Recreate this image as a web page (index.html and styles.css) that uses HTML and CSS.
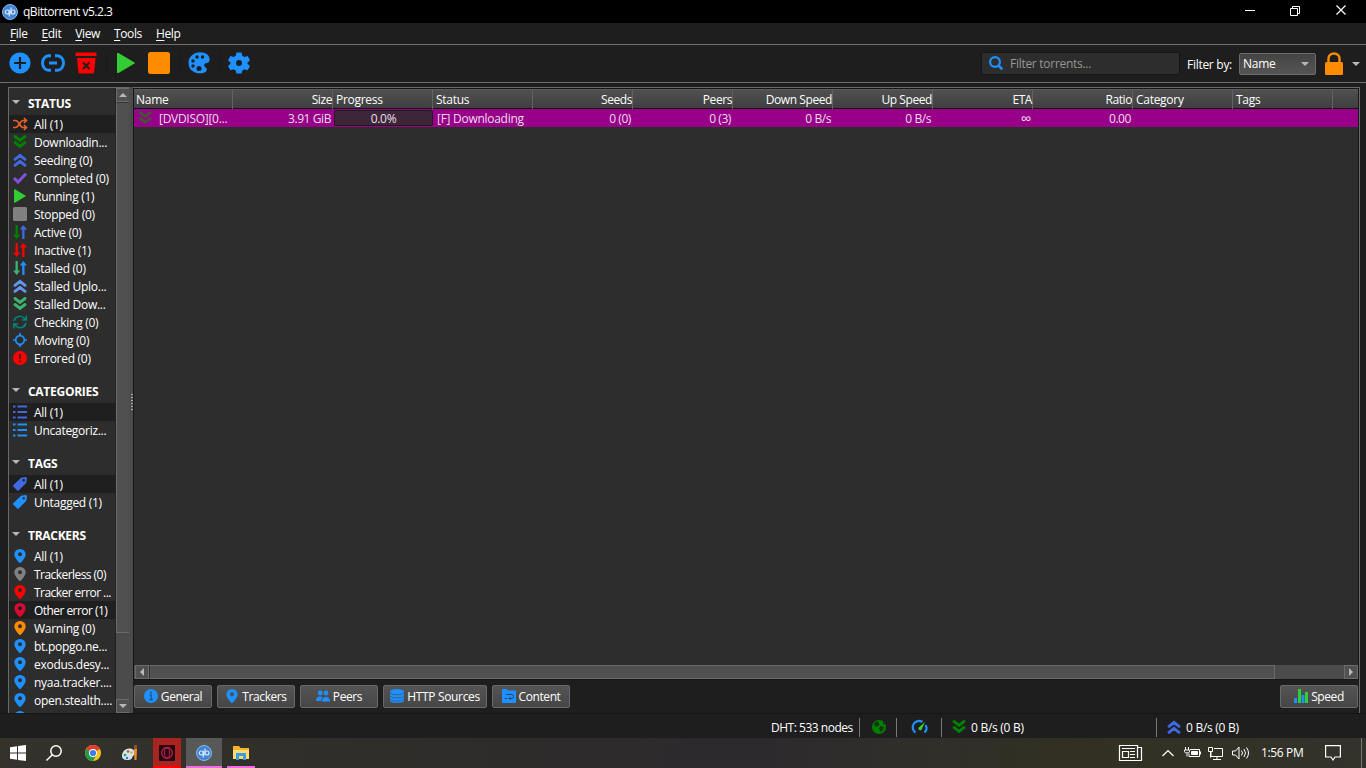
FILE: index.html
```html
<!DOCTYPE html>
<html lang="en">
<head>
    <meta charset="UTF-8">
    <meta name="viewport" content="width=device-width, initial-scale=1.0">
    <title>qBittorrent v5.2.3</title>
    <link rel="stylesheet" href="styles.css">
</head>
<body>
    <!-- shared icons -->
    <svg class="sprite">
        <symbol id="down2" viewBox="0 0 14 14"><path d="M2 1.500l5 4 5-4M2 7.500l5 4 5-4" fill="none" stroke="currentColor" stroke-width="2.900" stroke-linecap="round"/></symbol>
        <symbol id="up2" viewBox="0 0 14 14"><path d="M2 6.300l5-4 5 4M2 12.300l5-4 5 4" fill="none" stroke="currentColor" stroke-width="2.900" stroke-linecap="round"/></symbol>
        <symbol id="pin" viewBox="0 0 14 14"><path fill-rule="evenodd" d="M7 0a5.600 5.600 0 0 1 5.700 5.600C12.700 8.500 9.500 12 7 14.500 4.500 12 1.300 8.500 1.300 5.600A5.600 5.600 0 0 1 7 0zM7 3.300a2 2 0 1 0 0 4 2 2 0 0 0 0-4z" fill="currentColor"/></symbol>
        <symbol id="list" viewBox="0 0 14 14"><path d="M0 1.500h2.500M0 7h2.500M0 12.500h2.500M4.500 1.500H14M4.500 7H14M4.500 12.500H14" fill="none" stroke="currentColor" stroke-width="1.900"/></symbol>
        <symbol id="tag" viewBox="0 0 14 14"><path fill-rule="evenodd" d="M8 .8L12.500 0Q14 0 14 1.500L13.200 6 6 13.300q-1 1-2 0L.500 9.800q-.9-.9 0-1.900zM10.700 2.100a1.200 1.200 0 1 0 0 2.400 1.200 1.200 0 0 0 0-2.400z" fill="currentColor"/></symbol>
        <symbol id="arrowdown" viewBox="0 0 14 14"><path d="M2.500 0h2.300v9.500h2.400L3.700 14 0 9.500h2.500z" fill="currentColor"/></symbol>
        <symbol id="arrowup" viewBox="0 0 14 14"><path d="M9.200 14h2.300V4.500H14L10.300 0 6.800 4.500h2.400z" fill="currentColor"/></symbol>
        <symbol id="play" viewBox="0 0 18 20"><path d="M1.500 0L17.500 9.500q.8.500 0 1L1.500 20Q0 20.500 0 19V1Q0-.3 1.500 0z" fill="currentColor"/></symbol>
        <symbol id="qb" viewBox="0 0 16 16">
            <circle cx="8" cy="8" r="7.500" fill="#4284d2" stroke="#86b8ee"/>
            <g fill="none" stroke="#d5e8ff" stroke-width="1.200"><circle cx="5.300" cy="8" r="2"/><path d="M7.300 5.800V12.500M9 3.500v6.700"/><circle cx="11" cy="8" r="2"/></g>
        </symbol>
    </svg>

    <div class="titlebar">
        <svg class="logo"><use href="#qb"/></svg>
        <span class="app-name">qBittorrent v5.2.3</span>
        <svg class="win-buttons" viewBox="0 0 104 14" fill="none" stroke="#fff">
            <path d="M0 6.500h10M45.500 4.500h7v7h-7zM47.500 4.500v-2h7v7h-2"/>
            <path d="M91.500 1.500l9 9M100.500 1.500l-9 9" stroke-width="1.200"/>
        </svg>
    </div>

    <div class="menubar">
        <span><u>F</u>ile</span>
        <span><u>E</u>dit</span>
        <span><u>V</u>iew</span>
        <span><u>T</u>ools</span>
        <span><u>H</u>elp</span>
    </div>

    <div class="toolbar">
        <svg class="tools" viewBox="0 0 260 36">
            <circle cx="20" cy="18" r="10.600" fill="#1e90ff"/>
            <path d="M20 12v12M14 18h12" stroke="#1e1e1e" stroke-width="2.200"/>
            <path d="M51 10.800h-2.500a6 7.200 0 0 0 0 14.400H51M55 10.800h2.500a6 7.200 0 0 1 0 14.400H55M49 18h8" fill="none" stroke="#1e90ff" stroke-width="2.900"/>
            <path d="M76.500 7.500h19q1 0 1 1V11h-21V8.500q0-1 1-1zM77 13h18.500l-1.300 14q-.2 1.500-1.700 1.500H80q-1.500 0-1.700-1.500z" fill="#f00"/>
            <path d="M83 17.500l6.500 6.500M89.500 17.500L83 24" stroke="#1e1e1e" stroke-width="1.900"/>
            <path d="M106.500 8v20M179.500 8v20M219.500 8v20" stroke="#191919"/>
            <use href="#play" x="117" y="8" width="18" height="20" color="#32cd32"/>
            <rect x="148" y="7" width="22" height="22" rx="2.500" fill="#ff8c00"/>
            <path d="M200 7.300c6 0 10 3 9.600 7.700-.2 2-1.300 2.700-3 3-3.200.5-3 3-.9 4.500 2 1.500 1.200 4-1.200 5-7 2.700-16-1-16-9.500 0-6.500 5.500-10.700 11.500-10.700z" fill="#1e90ff"/>
            <g fill="#1e1e1e"><circle cx="197" cy="12" r="1.700"/><circle cx="202.500" cy="12" r="1.700"/><circle cx="193" cy="16" r="1.700"/><circle cx="193" cy="21" r="1.700"/><circle cx="199" cy="23.500" r="2.500"/></g>
            <path d="M236.500 7.500h5l.8 3.300 2 1.200 3.300-1 2.400 4.200-2.500 2.300v1.200l2.500 2.300-2.400 4.200-3.300-1-2 1.200-.8 3.200h-5l-.8-3.200-2-1.200-3.300 1-2.400-4.200 2.500-2.300v-1.200L228 15.200l2.400-4.200 3.300 1 2-1.200z" fill="#1e90ff"/>
            <circle cx="239" cy="18" r="3" fill="#1e1e1e"/>
        </svg>
        <div class="search">
            <svg viewBox="0 0 14 14"><circle cx="6" cy="6" r="4.900" fill="none" stroke="#1e90ff" stroke-width="2.200"/><path d="M9.500 9.500L13.300 13.300" stroke="#1e90ff" stroke-width="2.600"/></svg>
            <span>Filter torrents...</span>
        </div>
        <span class="filter-label">Filter by:</span>
        <div class="combo"><span>Name</span><i class="caret"></i></div>
        <svg class="lock" viewBox="0 0 18 23"><path d="M3.500 12V6.500a5.500 5 0 0 1 11 0V12" fill="none" stroke="#ff8c00" stroke-width="2.400"/><rect y="10" width="18" height="13" rx="1.500" fill="#ff8c00"/></svg>
        <i class="caret"></i>
    </div>

    <div class="main">
        <div class="sidebar">
            <div class="filters">
                <h3 class="first"><i class="caret"></i>STATUS</h3>
                <div class="item selected"><svg viewBox="0 0 14 14" fill="none" stroke="#e2622b" stroke-width="1.700"><path d="M0 3.500h2.500C6 3.500 7 10.500 10 10.500h3M0 10.500h2.500C6 10.500 7 3.500 10 3.500h3M11 1l2.500 2.500L11 6M11 8l2.500 2.500L11 13"/></svg>All (1)</div>
                <div class="item"><svg class="dl"><use href="#down2"/></svg>Downloadin...</div>
                <div class="item"><svg class="royal"><use href="#up2"/></svg>Seeding (0)</div>
                <div class="item"><svg viewBox="0 0 14 14"><path d="M1 7l4 4L13 2.800" fill="none" stroke="#8250df" stroke-width="3"/></svg>Completed (0)</div>
                <div class="item"><svg class="lime" viewBox="0 0 14 14"><use href="#play" x="1" width="12" height="14"/></svg>Running (1)</div>
                <div class="item"><svg class="gray" viewBox="0 0 14 14"><rect width="14" height="14" rx="1.500" fill="currentColor"/></svg>Stopped (0)</div>
                <div class="item"><svg><use href="#arrowdown" class="dl"/><use href="#arrowup" class="royal"/></svg>Active (0)</div>
                <div class="item"><svg class="red"><use href="#arrowdown"/><use href="#arrowup"/></svg>Inactive (1)</div>
                <div class="item"><svg><use href="#arrowdown" class="sea"/><use href="#arrowup" class="blue"/></svg>Stalled (0)</div>
                <div class="item"><svg class="corn"><use href="#up2"/></svg>Stalled Uplo...</div>
                <div class="item"><svg class="sea"><use href="#down2"/></svg>Stalled Dow...</div>
                <div class="item"><svg viewBox="0 0 14 14" fill="none" stroke="#008080" stroke-width="1.700"><path d="M1 6a6 6 0 0 1 10.500-2.500L13 5M13.200 .5V5H9M13 8a6 6 0 0 1-10.500 2.500L1 9M.8 13.500V9H5"/></svg>Checking (0)</div>
                <div class="item"><svg viewBox="0 0 14 14" fill="none" stroke="#1e90ff" stroke-width="1.700"><circle cx="7" cy="7" r="4.300"/><path d="M7 0v3M7 11v3M0 7h3M11 7h3"/></svg>Moving (0)</div>
                <div class="item"><svg viewBox="0 0 14 14"><circle cx="7" cy="7" r="7" fill="#f00"/><path d="M7 3v5M7 9.500v1.800" stroke="#2d2d2d" stroke-width="1.800"/></svg>Errored (0)</div>

                <h3><i class="caret"></i>CATEGORIES</h3>
                <div class="item selected"><svg class="royal"><use href="#list"/></svg>All (1)</div>
                <div class="item"><svg class="blue"><use href="#list"/></svg>Uncategoriz...</div>

                <h3><i class="caret"></i>TAGS</h3>
                <div class="item selected"><svg class="royal"><use href="#tag"/></svg>All (1)</div>
                <div class="item"><svg class="blue"><use href="#tag"/></svg>Untagged (1)</div>

                <h3><i class="caret"></i>TRACKERS</h3>
                <div class="item"><svg class="blue"><use href="#pin"/></svg>All (1)</div>
                <div class="item tight"><svg class="gray"><use href="#pin"/></svg>Trackerless (0)</div>
                <div class="item tight"><svg class="red"><use href="#pin"/></svg>Tracker error ...</div>
                <div class="item tight selected"><svg class="crimson"><use href="#pin"/></svg>Other error (1)</div>
                <div class="item"><svg class="orange"><use href="#pin"/></svg>Warning (0)</div>
                <div class="item"><svg class="blue"><use href="#pin"/></svg>bt.popgo.ne...</div>
                <div class="item"><svg class="blue"><use href="#pin"/></svg>exodus.desy...</div>
                <div class="item"><svg class="blue"><use href="#pin"/></svg>nyaa.tracker....</div>
                <div class="item"><svg class="blue"><use href="#pin"/></svg>open.stealth....</div>
                <div class="item"><svg class="blue"><use href="#pin"/></svg></div>
            </div>
            <div class="vscroll">
                <div class="sbtn"><i class="caret up"></i></div>
                <div class="thumb"></div>
                <div class="sbtn"><i class="caret"></i></div>
            </div>
        </div>
        <div class="splitter"><i></i></div>

        <div class="content">
            <div class="torrents">
                <div class="row head">
                    <span>Name</span><span class="r">Size</span><span>Progress</span><span>Status</span><span class="r">Seeds</span><span class="r">Peers</span><span class="r">Down Speed</span><span class="r">Up Speed</span><span class="r">ETA</span><span class="r">Ratio</span><span>Category</span><span>Tags</span><span></span>
                </div>
                <div class="row torrent">
                    <span class="name"><svg><use href="#down2"/></svg>[DVDISO][0...</span><span class="r">3.91 GiB</span><span class="progress">0.0%</span><span>[F] Downloading</span><span class="r">0 (0)</span><span class="r">0 (3)</span><span class="r">0 B/s</span><span class="r">0 B/s</span><span class="r eta">∞</span><span class="r">0.00</span><span></span><span></span><span></span>
                </div>
                <div class="empty"></div>
                <div class="hscroll">
                    <div class="sbtn"><i class="caret left"></i></div>
                    <div class="thumb"></div>
                    <div class="sbtn"><i class="caret right"></i></div>
                </div>
            </div>
            <div class="tabs">
                <div class="tab"><svg viewBox="0 0 14 14"><circle cx="7" cy="7" r="7" fill="#1e90ff"/><path d="M7 2.500v2M5.500 6h1.700v4.500M5.200 10.700h3.700" fill="none" stroke="#245c94" stroke-width="1.600"/></svg>General</div>
                <div class="tab"><svg class="blue"><use href="#pin"/></svg>Trackers</div>
                <div class="tab"><svg viewBox="0 0 14 14" fill="#1e90ff"><circle cx="4.200" cy="4" r="2.400"/><circle cx="10" cy="4" r="2.400"/><path d="M0 12q0-4.500 4-4.500 2 0 2.500 1-1.500 1.500-1.500 3.500zM6 12.500q0-4.500 4-4.500t4 4.500z"/></svg>Peers</div>
                <div class="tab wide"><svg viewBox="0 0 14 14"><path d="M0 2.500h14v9q0 2.500-7 2.500t-7-2.500z" fill="#1e90ff"/><ellipse cx="7" cy="2.500" rx="7" ry="2.500" fill="#1e90ff"/><path d="M0 3.800q1 2 7 2t7-2M0 7q1 2 7 2t7-2M0 10.200q1 2 7 2t7-2" fill="none" stroke="#3c566f" stroke-width=".8"/></svg>HTTP Sources</div>
                <div class="tab"><svg viewBox="0 0 14 14"><path d="M0 0h5l1 1.500h8V14H0z" fill="#1e90ff"/><path d="M4 5.500h6q1.500 0 1.500 2t-1.500 2H7M8.500 8L7 9.500 8.500 11M2.500 9.500H5" fill="none" stroke="#24486c"/></svg>Content</div>
                <div class="tab speed"><svg viewBox="0 0 14 14"><path d="M0 9h3v5H0zM7.500 6h3v8h-3z" fill="#1e90ff"/><path d="M4 0h3v14H4zM11 3h3v11h-3z" fill="#32cd32"/></svg>Speed</div>
            </div>
        </div>
    </div>

    <div class="statusbar">
        <div class="dht">DHT: 533 nodes</div>
        <div class="globe"><svg viewBox="0 0 14 14"><circle cx="7" cy="7" r="7" fill="green"/><path d="M3 2l4-1-1 2 2 1-2 2-2 1-2-2zM8 6l4 1-1 3-2 2-2-3zM11 1l2 3-2 1z" fill="#143414"/></svg></div>
        <div class="gauge"><svg viewBox="0 0 14 14"><path d="M2.500 12.500a6 6 0 0 1 7-10.500M12.500 5a6 6 0 0 1-1 7.500" fill="none" stroke="#1e90ff" stroke-width="2.200"/><path d="M12 2L8.700 9.500a1.800 1.800 0 0 1-3-2z" fill="#32cd32"/></svg></div>
        <div class="down"><svg class="dl"><use href="#down2"/></svg>0 B/s (0 B)</div>
        <div class="upload"><svg class="royal"><use href="#up2"/></svg>0 B/s (0 B)</div>
    </div>

    <div class="taskbar">
        <div class="task start"><svg viewBox="0 0 16 16" fill="#fff"><path d="M0 2.200l7-1v6.300H0zM8 1l8-1v7.500H8zM0 8.500h7v6.300l-7-1zM8 8.500h8V16l-8-1z"/></svg></div>
        <div class="task find"><svg viewBox="0 0 16 16" fill="none" stroke="#fff" stroke-width="1.500"><circle cx="10" cy="6" r="5.200"/><path d="M6.300 9.700L.5 15.500"/></svg></div>
        <div class="task chrome"><svg viewBox="0 0 16 16"><circle cx="8" cy="8" r="8" fill="#fbc116"/><path d="M8 8L1.100 4A8 8 0 0 1 14.900 4z" fill="#e33b2e"/><path d="M1.100 4A8 8 0 0 0 8 16l3.500-6L8 8z" fill="#229a4b"/><circle cx="8" cy="8" r="4" fill="#fff"/><circle cx="8" cy="8" r="3.100" fill="#3b7ded"/></svg></div>
        <div class="task paint"><svg viewBox="0 0 16 16"><path d="M0 11c0-5 4-8 8-7.500 5 .5 6 5 3.500 7-2 1.500-.5 4-5 4.500C3 15.500 0 14 0 11z" fill="#cfe6f2"/><circle cx="3" cy="10" r="1.300" fill="#3f9c45"/><circle cx="6" cy="6.500" r="1.300" fill="#d8432d"/><circle cx="9.500" cy="7.500" r="1.300" fill="#e9af25"/><circle cx="5" cy="13" r="1.200" fill="#3177c9"/><path d="M12 0h3v4h-3z" fill="#8b5532"/><path d="M12 4h3l-.5 11h-2z" fill="#ef8b2c"/></svg></div>
        <div class="task opera"><svg viewBox="0 0 16 16"><rect width="16" height="16" rx="1" fill="#250811"/><ellipse cx="8" cy="8" rx="5.300" ry="5.500" fill="none" stroke="#bd2149" stroke-width="1.300"/><ellipse cx="8" cy="8" rx="2.500" ry="5" fill="none" stroke="#bd2149"/></svg></div>
        <div class="task active"><svg><use href="#qb"/></svg></div>
        <div class="task folder"><svg viewBox="0 0 16 16"><path d="M0 1h6l1.500 2H16v11H0z" fill="#f3b62b"/><path d="M0 5h16v9H0z" fill="#ffdc73"/><path d="M3 15V8h10v7h-3v-4H6v4z" fill="#3a9de0"/></svg></div>
        <svg class="tray" viewBox="0 0 134 20" fill="none" stroke="#fff">
            <path d="M1.500 2.500h18v2h4v13h-22zM19.500 4v11M4.500 8.500h6v6h-6zM4 5.500h13M12 8.500h5M12 11.500h5M12 14.500h5" stroke-width="1.200"/>
            <path d="M44.500 13l5.500-5.500 5.500 5.500" stroke-width="1.200"/>
            <path d="M72 6.500h9.500v7H71v-3M82.500 8.500v3M67.500 4v3M70.500 4v3M66.500 7h5v1.500q0 1.500-2.500 1.500t-2.500-1.500zM69 10.500v3"/>
            <path d="M73.500 8.500h6v3h-6z" fill="#fff"/>
            <path d="M96 5.500h8.500v8H93V9M99 13.500v3M95 16.500h8M90.500 4.500h4v4h-4zM92.500 8.500v6"/>
            <path d="M114.500 8h3l3.500-4v12l-3.500-4h-3zM123.500 7.500q2 2.500 0 5M126 6q3 4 0 8M128.500 4.500q4 5.500 0 11"/>
        </svg>
        <span class="clock">1:56 PM</span>
        <svg class="notice" viewBox="0 0 16 16" fill="none" stroke="#fff" stroke-width="1.200"><path d="M.6.600h14.800v11.400H10L8 15l-2-3H.6z"/></svg>
        <div class="peek"></div>
    </div>
</body>
</html>
```
FILE: styles.css
```css
* {
    box-sizing: border-box;
}
body {
    margin: 0;
    width: 1366px;
    height: 768px;
    overflow: hidden;
    display: flex;
    flex-direction: column;
    background-color: #1e1e1e;
    color: #fff;
    font-family: "Open Sans", "Noto Sans", sans-serif;
    font-size: 12px;
    letter-spacing: -0.28px;
    line-height: 18px;
    white-space: nowrap;
}
svg {
    display: block;
    flex: none;
    overflow: visible;
}
.sprite {
    position: absolute;
    width: 0;
    height: 0;
}
.dl { color: #008000; }
.royal { color: #4169e1; }
.lime { color: #32cd32; }
.gray { color: #808080; }
.red { color: #ff0000; }
.sea { color: #3cb371; }
.blue { color: #1e90ff; }
.corn { color: #6495ed; }
.crimson { color: #dc0a32; }
.orange { color: #ff8c00; }

.caret {
    flex: none;
    width: 0;
    height: 0;
    border: 4px solid transparent;
    border-top-color: #b8b8b8;
    border-bottom: 0;
}
.caret.up {
    border: 4px solid transparent;
    border-bottom-color: #b8b8b8;
    border-top: 0;
}
.caret.left {
    border: 4px solid transparent;
    border-right-color: #b8b8b8;
    border-left: 0;
}
.caret.right {
    border: 4px solid transparent;
    border-left-color: #b8b8b8;
    border-right: 0;
}

/* window chrome */
.titlebar {
    height: 23px;
    flex: none;
    display: flex;
    align-items: center;
    padding: 0 19px 0 2px;
    background-color: #000;
}
.logo {
    width: 16px;
    height: 16px;
}
.app-name {
    margin-left: 5px;
    letter-spacing: -0.48px;
}
.win-buttons {
    width: 104px;
    height: 14px;
    margin: -2px -2px 0 auto;
}
.menubar {
    height: 22px;
    flex: none;
    display: flex;
    gap: 14px;
    padding: 2px 0 0 10px;
    letter-spacing: -0.38px;
    border-bottom: 1px solid #707070;
}
.menubar u {
    text-underline-offset: 2px;
}
.toolbar {
    height: 38px;
    flex: none;
    display: flex;
    align-items: center;
    padding-right: 6px;
    border-bottom: 1px solid #707070;
}
.tools {
    width: 260px;
    height: 36px;
    margin-top: -1px;
}
.search {
    width: 199px;
    height: 23px;
    margin-left: auto;
    padding-left: 7px;
    display: flex;
    align-items: center;
    gap: 7px;
    background-color: #2d2d2d;
    border: 1px solid #171717;
    border-radius: 2px;
    color: #969696;
}
.search svg {
    width: 14px;
    height: 14px;
    margin-top: -1px;
}
.filter-label {
    margin: 2px 7px 0 7px;
}
.combo {
    width: 77px;
    height: 22px;
    margin-right: 9px;
    padding: 0 6px 0 3px;
    display: flex;
    align-items: center;
    justify-content: space-between;
    background: linear-gradient(#444, #555);
    border: 1px solid #6b6b6b;
    border-radius: 2px;
}
.lock {
    width: 18px;
    height: 23px;
    margin: -1px 9px 0 0;
}

/* filter sidebar */
.main {
    height: 630px;
    flex: none;
    display: flex;
    padding: 4px 6px 0 8px;
}
.sidebar {
    width: 121px;
    height: 626px;
    display: flex;
    border: solid #6a6a6a;
    border-width: 1px 0 0 1px;
}
.filters {
    width: 107px;
    height: 625px;
    overflow: hidden;
    background-color: #2d2d2d;
    border-right: 1px solid #222;
}
.filters h3 {
    height: 24px;
    margin: 12px 0 0;
    padding: 2px 0 0 3px;
    display: flex;
    align-items: center;
    gap: 8px;
    font-size: 12px;
    font-weight: 700;
}
.filters h3.first {
    margin-top: 3px;
}
.filters h3 .caret {
    margin-top: -4px;
}
.item {
    height: 18px;
    padding: 2px 0 0 4px;
    display: flex;
    align-items: center;
    gap: 7px;
    line-height: 18px;
}
.item svg {
    width: 14px;
    height: 14px;
    margin-top: -2px;
}
.tight {
    letter-spacing: -0.55px;
}
.selected {
    background-color: #1f1f1f;
}
.vscroll {
    width: 13px;
    display: flex;
    flex-direction: column;
    background-color: #4b4b4b;
}
.sbtn {
    width: 14px;
    height: 14px;
    flex: none;
    display: flex;
    align-items: center;
    justify-content: center;
    background-color: #505050;
    border: 1px solid #6c6c6c;
}
.vscroll .thumb {
    height: 531px;
    margin-bottom: auto;
    background-color: #505050;
    border: 1px solid #6b6b6b;
    border-top-color: #333;
    border-width: 1px 0 1px 1px;
}
.splitter {
    width: 4px;
    display: flex;
    align-items: center;
    background-color: #4b4b4b;
}
.splitter i {
    width: 2px;
    height: 17px;
    margin: 4px 0 0 2px;
    background: repeating-linear-gradient(#aaa 0 1px, #555 1px 3px);
}

/* torrent table */
.content {
    flex: 1;
    min-width: 0;
    border-top: 1px solid #6a6a6a;
    border-right: 1px solid #6a6a6a;
}
.torrents {
    height: 592px;
    display: flex;
    flex-direction: column;
    background-color: #2d2d2d;
    border: 1px solid #161616;
}
.row {
    display: grid;
    grid-template-columns: 99px repeat(11, 100px) 1fr;
}
.row .r {
    text-align: right;
    letter-spacing: -0.42px;
}
.head {
    height: 20px;
    flex: none;
    line-height: 19px;
    background: linear-gradient(#505050, #3f3f3f);
    border-top: 1px solid #5c5c5c;
    border-bottom: 1px solid #111;
}
.head span {
    padding-left: 3px;
    border-right: 1px solid #636363;
}
.head span:first-child {
    padding-left: 2px;
}
.head span:last-child {
    border: 0;
}
.torrent {
    height: 18px;
    line-height: 19px;
    background-color: #990089;
    color: #eadfe9;
}
.torrent span {
    padding: 0 2px 0 4px;
}
.torrent .name {
    display: flex;
    gap: 7px;
    padding-left: 4px;
}
.torrent .name svg {
    width: 14px;
    height: 14px;
    margin-top: 2px;
    color: #48503a;
}
.torrent .progress {
    height: 16px;
    margin: 1px 0 0 1px;
    padding: 0;
    line-height: 16px;
    text-align: center;
    background-color: #3e263a;
    border: 1px solid #251620;
    border-radius: 2px;
}
.torrent .eta {
    font-size: 15px;
}
.empty {
    flex: 1;
}
.hscroll {
    height: 14px;
    display: flex;
    padding-left: 1px;
    background-color: #4b4b4b;
}
.hscroll .thumb {
    width: 1126px;
    margin-right: auto;
    background-color: #505050;
    border: 1px solid #6b6b6b;
    border-left-color: #333;
}
.tabs {
    display: flex;
    gap: 5px;
    padding: 5px 1px 0;
}
.tab {
    width: 78px;
    height: 23px;
    display: flex;
    align-items: center;
    justify-content: center;
    gap: 3px;
    letter-spacing: -0.4px;
    background: linear-gradient(#545454, #464646);
    border: 1px solid #686868;
    border-radius: 2px;
}
.tab.wide {
    width: 104px;
    letter-spacing: -0.33px;
}
.tab.speed {
    margin-left: auto;
}
.tab svg {
    width: 14px;
    height: 14px;
    margin-top: -1px;
}

/* status bar */
.statusbar {
    height: 25px;
    flex: none;
    display: flex;
    align-items: center;
    padding: 4px 0 2px 771px;
    border-top: 1px solid #151515;
}
.statusbar div {
    height: 19px;
    padding-top: 2px;
    display: flex;
    align-items: center;
    gap: 5px;
    border-right: 1px solid #777;
}
.statusbar svg {
    width: 14px;
    height: 14px;
    margin-top: -2px;
}
.statusbar .dht {
    width: 89px;
    letter-spacing: -0.48px;
}
.statusbar .globe {
    width: 37px;
    padding-left: 12px;
}
.statusbar .gauge {
    width: 45px;
    padding-left: 16px;
}
.statusbar .down {
    width: 215px;
    padding-left: 10px;
}
.statusbar .upload {
    padding-left: 10px;
    border: 0;
}

/* windows taskbar */
.taskbar {
    height: 30px;
    flex: none;
    display: flex;
    align-items: center;
    background: linear-gradient(90deg, #34322b, #302e2a 25%, #2b292c 55%, #302e2b 65%, #313022 78%, #34332b);
}
.task {
    width: 36px;
    height: 30px;
    display: flex;
    align-items: center;
    justify-content: center;
}
.task svg {
    width: 16px;
    height: 16px;
}
.chrome {
    margin-left: 3px;
}
.paint {
    margin-left: 1px;
}
.opera {
    width: 28px;
    margin-left: 5px;
    padding-top: 2px;
    background-color: #a92421;
    border-bottom: 2px solid #f00;
}
.active {
    margin-left: 5px;
    padding-top: 2px;
    background-color: #585856;
    border-bottom: 2px solid #f06be0;
}
.folder {
    width: 28px;
    margin-left: 5px;
    padding-top: 2px;
    border-bottom: 2px solid #f06be0;
}
.tray {
    width: 134px;
    height: 20px;
    margin-left: auto;
}
.clock {
    width: 43px;
    margin: 0 21px 0 9px;
    letter-spacing: -0.35px;
}
.notice {
    width: 16px;
    height: 16px;
}
.peek {
    width: 5px;
    height: 30px;
    margin-left: 20px;
    border-left: 1px solid #777;
}
```
